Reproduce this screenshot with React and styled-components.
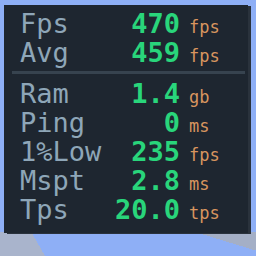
import React from "react";
import styled, { createGlobalStyle } from "styled-components";

const stats = [
  [
    { label: "Fps", value: "470", unit: "fps" },
    { label: "Avg", value: "459", unit: "fps" },
  ],
  [
    { label: "Ram", value: "1.4", unit: "gb" },
    { label: "Ping", value: "0", unit: "ms" },
    { label: "1%Low", value: "235", unit: "fps" },
    { label: "Mspt", value: "2.8", unit: "ms" },
    { label: "Tps", value: "20.0", unit: "tps" },
  ],
];

function App() {
  return (
    <>
      <Global />
      <Scene>
        <Overlay>
          {stats.map((group, i) => (
            <React.Fragment key={i}>
              {i > 0 && <Divider />}
              <Group>
                {group.map((s) => (
                  <Row key={s.label}>
                    <Label>{s.label}</Label>
                    <Value>{s.value}</Value>
                    <Unit>{s.unit}</Unit>
                  </Row>
                ))}
              </Group>
            </React.Fragment>
          ))}
        </Overlay>
      </Scene>
    </>
  );
}

export default App;

const Global = createGlobalStyle`
  html, body { margin: 0; padding: 0; }
  body { background: #8eaff6; }
`;

// sky, with bits of grey terrain showing under the overlay
const Scene = styled.div`
  width: 256px;
  height: 256px;
  overflow: hidden;
  box-sizing: border-box;
  padding: 5px 5px 0 4px;
  background:
    linear-gradient(60deg, #a9b4cc 39px, transparent 39px) left bottom / 100% 24px no-repeat,
    linear-gradient(17deg, transparent 80px, #a4afc6 80px) left bottom / 100% 24px no-repeat,
    #8eaff6;
`;

const Overlay = styled.div`
  width: 244px;
  height: 228px;
  background: #1e2630;
  box-shadow: 3px 1px 0 #2a323c;
  padding: 4px 0 0 16px;
  box-sizing: border-box;
  font-family: "DejaVu Sans Mono", "Liberation Mono", monospace;
`;

const Group = styled.div`
  display: flex;
  flex-direction: column;
`;

const Row = styled.div`
  display: grid;
  grid-template-columns: 100px 60px 1fr;
  align-items: baseline;
  height: 29px;
  line-height: 29px;
`;

const Label = styled.span`
  font-size: 27px;
  color: #8ea6b8;
`;

const Value = styled.span`
  justify-self: end;
  font-size: 27px;
  font-weight: bold;
  color: #29d57b;
`;

const Unit = styled.span`
  padding-left: 9px;
  font-size: 17px;
  color: #d8955f;
`;

const Divider = styled.div`
  height: 3px;
  margin: 4px 3px 5px -8px;
  background: #37434f;
`;
